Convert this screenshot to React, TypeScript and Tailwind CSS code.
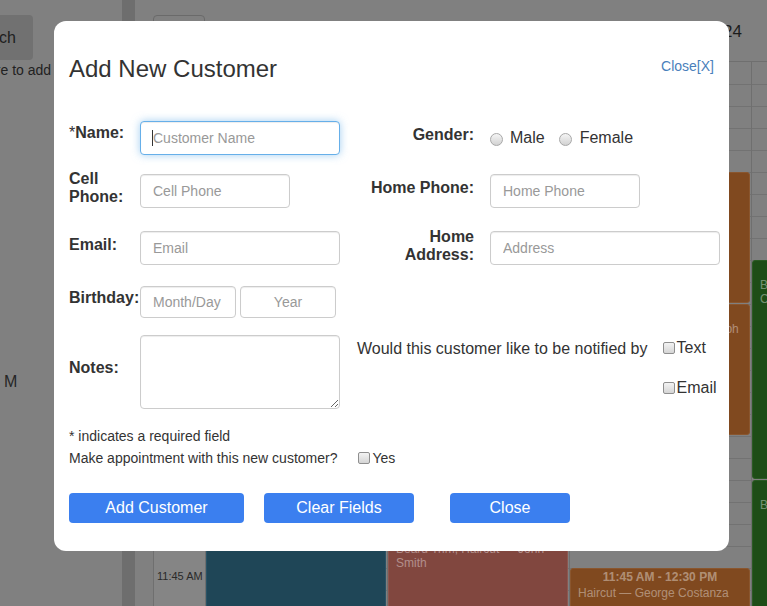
import React from "react";

const inputBase =
  "shrink-0 rounded-[4px] border bg-white px-[12px] text-[14px] text-[#555] outline-none placeholder:text-[#999]";
const inputCls = `${inputBase} h-[34px] border-[#ccc] shadow-[inset_0_1px_1px_rgba(0,0,0,0.075)]`;
const smallInputCls = `${inputBase} h-[32px] border-[#ccc] shadow-[inset_0_1px_1px_rgba(0,0,0,0.075)]`;
const labelCls = "shrink-0 text-[16px] font-bold leading-[18px] text-[#333]";
const checkCls =
  "size-[12px] shrink-0 appearance-none rounded-[2px] border border-[#8f8f8f] bg-[linear-gradient(#f3f3f3,#d5d5d5)]";
const radioCls =
  "size-[13px] shrink-0 appearance-none rounded-full border border-[#a8a8a8] bg-[linear-gradient(#f5f5f5,#d2d2d2)]";
const btnCls =
  "h-[30px] shrink-0 rounded-[4px] bg-[#3b7fef] text-[16px] leading-[30px] text-white";

// calendar runs from 6:00 AM in 15 minute slots
const slots = Array.from({ length: 25 }, (_, i) => {
  const m = 360 + i * 15;
  const h = Math.floor(m / 60);
  const h12 = h > 12 ? h - 12 : h;
  return `${h12}:${String(m % 60).padStart(2, "0")} ${h >= 12 ? "PM" : "AM"}`;
});

type Ev = { col: number; start: number; span: number; bg: string; time: string; text: string };

const events: Ev[] = [
  { col: 0, start: 16, span: 12, bg: "bg-[#1f4657] border-[#2a5366]", time: "10:00 AM - 1:00 PM", text: "Color, Haircut — Elaine Benes" },
  { col: 1, start: 21, span: 6, bg: "bg-[#81473f] border-[#8d564e]", time: "11:15 AM - 12:45 PM", text: "Beard Trim, Haircut — John Smith" },
  { col: 2, start: 5, span: 6, bg: "bg-[#80491f] border-[#8a562e]", time: "7:15 AM - 8:45 AM", text: "Haircut — Cosmo Kramer" },
  { col: 2, start: 11, span: 6, bg: "bg-[#80491f] border-[#8a562e]", time: "8:45 AM - 10:15 AM", text: "Beard Trim, Haircut — Joseph Smith" },
  { col: 2, start: 23, span: 3, bg: "bg-[#80491f] border-[#8a562e]", time: "11:45 AM - 12:30 PM", text: "Haircut — George Costanza" },
  { col: 3, start: 9, span: 10, bg: "bg-[#1e4d17] border-[#2b5a24]", time: "8:15 AM - 10:45 AM", text: "Beard Trim, Haircut — Frank Costanza" },
  { col: 3, start: 19, span: 8, bg: "bg-[#1e4d17] border-[#2b5a24]", time: "10:45 AM - 12:45 PM", text: "Beard Trim — Jerry Seinfeld" },
];

function Background() {
  return (
    <div className="flex h-full">
      <div className="w-[122px] shrink-0 overflow-hidden">
        <div className="-ml-[52px] pt-[15px]">
          <div className="flex h-[45px] w-[85px] items-center justify-center rounded-[4px] bg-[#717171] text-[16px] text-[#1e1e1e]">
            Search
          </div>
          <p className="-ml-[2px] whitespace-nowrap text-[14px] leading-[20px] text-[#222]">
            Click here to add a new customer
          </p>
        </div>
        <div className="mt-[293px] pl-[4px] text-[16px] leading-[18px] text-[#262626]">M</div>
      </div>
      <div className="w-[13px] shrink-0 bg-[#6e6e6e]" />
      <div className="w-[800px] shrink-0 pl-[18px]">
        <div className="flex h-[61px] w-[589px] items-start justify-between">
          <div className="mt-[15px] h-[34px] w-[52px] rounded-[4px] border border-[#6a6a6a]" />
          <div className="mt-[22px] text-[17px] leading-[20px] text-[#1c1c1c]">January 22 – 28, 2024</div>
        </div>
        <div className="flex border-t border-[#6f6f6f]">
          <div className="w-[52px] shrink-0 border-l border-[#6f6f6f] bg-[#858585]">
            {slots.map((s, i) => (
              <div key={i} className="h-[22px] pl-[3px] pt-[1px] text-[11px] leading-[14px] text-[#2a2a2a]">
                {i % 4 === 3 ? s : ""}
              </div>
            ))}
          </div>
          {[0, 1, 2, 3].map((c) => (
            <div key={c} className="relative w-[182px] shrink-0 border-l border-[#6f6f6f]">
              {slots.map((_, i) => (
                <div key={i} className="h-[22px] border-t border-[#727272] first:border-t-0" />
              ))}
              {events
                .filter((e) => e.col === c)
                .map((e, i) => (
                  <div
                    key={i}
                    className={`absolute left-0 right-[1px] overflow-hidden rounded-[3px] border px-[7px] text-[12px] text-white/40 ${e.bg}`}
                    style={{ top: e.start * 22, height: e.span * 22 - 1 }}
                  >
                    <div className="text-center font-bold leading-[17px]">{e.time}</div>
                    <div className="leading-[14px]">{e.text}</div>
                  </div>
                ))}
            </div>
          ))}
        </div>
      </div>
    </div>
  );
}

function Modal() {
  return (
    <div className="absolute left-[54px] top-[21px] h-[530px] w-[675px] rounded-[12px] bg-white px-[15px] pt-[35px] text-[#333]">
      <div className="flex items-start justify-between">
        <h2 className="text-[24px] leading-[26px] text-[#333]">Add New Customer</h2>
        <a className="mt-[2px] text-[14px] leading-[16px] text-[#4a7fbb]">Close[X]</a>
      </div>

      <div className="mt-[39px] flex h-[34px]">
        <div className={`${labelCls} mt-[3px] w-[71px]`}>
          <span className="font-normal">*</span>Name:
        </div>
        <div className="relative shrink-0">
          <input
            className={`${inputBase} h-[34px] w-[200px] border-[#66afe9] shadow-[inset_0_1px_1px_rgba(0,0,0,0.075),0_0_8px_rgba(102,175,233,0.6)]`}
            placeholder="Customer Name"
          />
          <span className="absolute left-[12px] top-[9px] h-[16px] w-px bg-[#333]" />
        </div>
        <div className={`${labelCls} ml-[16px] mt-[5px] w-[118px] text-right`}>Gender:</div>
        <div className="ml-[16px] flex items-center text-[16px] leading-[18px]">
          <input type="radio" name="g" className={`${radioCls} mt-[3px]`} />
          <span className="ml-[7px]">Male</span>
          <input type="radio" name="g" className={`${radioCls} ml-[14px] mt-[3px]`} />
          <span className="ml-[8px]">Female</span>
        </div>
      </div>

      <div className="mt-[19px] flex h-[34px]">
        <div className={`${labelCls} -mt-[4px] w-[71px]`}>
          Cell
          <br />
          Phone:
        </div>
        <input className={`${inputCls} w-[150px]`} placeholder="Cell Phone" />
        <div className={`${labelCls} ml-[66px] mt-[5px] w-[118px] text-right`}>Home Phone:</div>
        <input className={`${inputCls} ml-[16px] w-[150px]`} placeholder="Home Phone" />
      </div>

      <div className="mt-[23px] flex h-[34px]">
        <div className={`${labelCls} mt-[5px] w-[71px]`}>Email:</div>
        <input className={`${inputCls} w-[200px]`} placeholder="Email" />
        <div className={`${labelCls} ml-[16px] -mt-[3px] w-[118px] text-right`}>
          Home
          <br />
          Address:
        </div>
        <input className={`${inputCls} ml-[16px] w-[230px]`} placeholder="Address" />
      </div>

      <div className="mt-[21px] flex h-[32px]">
        <div className={`${labelCls} mt-[3px] w-[71px] whitespace-nowrap`}>Birthday:</div>
        <input className={`${smallInputCls} w-[96px]`} placeholder="Month/Day" />
        <input className={`${smallInputCls} ml-[4px] w-[96px] text-center`} placeholder="Year" />
      </div>

      <div className="mt-[17px] flex h-[74px]">
        <div className={`${labelCls} mt-[24px] w-[71px]`}>Notes:</div>
        <textarea className={`${inputBase} h-[74px] w-[200px] border-[#ccc] py-[6px] shadow-[inset_0_1px_1px_rgba(0,0,0,0.075)]`} />
        <div className="ml-[17px] mt-[5px] shrink-0 text-[16px] leading-[18px]">
          Would this customer like to be notified by
        </div>
        <div className="ml-[15px] mt-[4px] flex flex-col gap-[22px] text-[16px] leading-[18px]">
          <label className="flex items-center">
            <input type="checkbox" className={checkCls} />
            <span className="ml-[2px]">Text</span>
          </label>
          <label className="flex items-center">
            <input type="checkbox" className={checkCls} />
            <span className="ml-[2px]">Email</span>
          </label>
        </div>
      </div>

      <p className="mt-[17px] text-[14px] leading-[20px]">* indicates a required field</p>
      <div className="mt-[2px] flex items-center text-[14px] leading-[20px]">
        <span>Make appointment with this new customer?</span>
        <input type="checkbox" className={`${checkCls} ml-[21px]`} />
        <span className="ml-[2px]">Yes</span>
      </div>

      <div className="mt-[25px] flex">
        <button className={`${btnCls} w-[175px]`}>Add Customer</button>
        <button className={`${btnCls} ml-[20px] w-[150px]`}>Clear Fields</button>
        <button className={`${btnCls} ml-[36px] w-[120px]`}>Close</button>
      </div>
    </div>
  );
}

export default function App() {
  return (
    <div className="relative h-[606px] w-[767px] overflow-hidden bg-[#808080] font-['Liberation_Sans',Arial,sans-serif]">
      <Background />
      <Modal />
    </div>
  );
}
